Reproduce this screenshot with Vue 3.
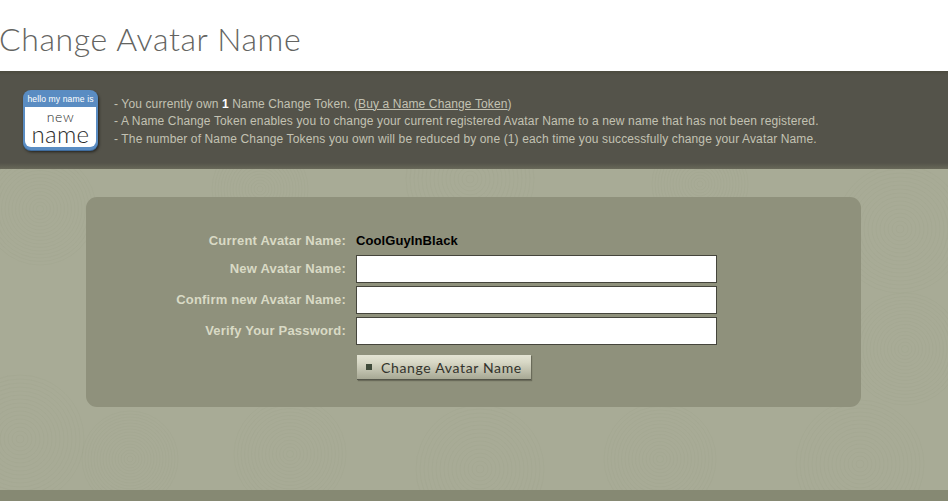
<template>
  <div class="page">
    <h1 class="title">Change Avatar Name</h1>

    <div class="info-bar">
      <div class="badge">
        <div class="badge-top">hello my name is</div>
        <div class="badge-body">
          <span class="badge-new">new</span>
          <span class="badge-name">name</span>
        </div>
      </div>
      <div class="info-text">
        <p>- You currently own <b>1</b> Name Change Token. (<a href="#">Buy a Name Change Token</a>)</p>
        <p>- A Name Change Token enables you to change your current registered Avatar Name to a new name that has not been registered.</p>
        <p>- The number of Name Change Tokens you own will be reduced by one (1) each time you successfully change your Avatar Name.</p>
      </div>
    </div>

    <div class="content">
      <svg class="swirls" width="948" height="322" viewBox="0 0 948 322" aria-hidden="true">
        <g v-for="s in swirls" :key="s.x + '-' + s.y">
          <circle v-for="r in rings" :key="r" :cx="s.x" :cy="s.y" :r="r * s.size" />
        </g>
      </svg>
      <form class="card" @submit.prevent>
        <div class="row row-current">
          <label>Current Avatar Name:</label>
          <span class="current">CoolGuyInBlack</span>
        </div>
        <div class="row">
          <label>New Avatar Name:</label>
          <input type="text" />
        </div>
        <div class="row">
          <label>Confirm new Avatar Name:</label>
          <input type="password" />
        </div>
        <div class="row">
          <label>Verify Your Password:</label>
          <input type="password" />
        </div>
        <div class="row row-btn">
          <label></label>
          <button class="submit"><i></i>Change Avatar Name</button>
        </div>
      </form>
    </div>

    <div class="bottom-strip"></div>
  </div>
</template>

<script setup>
const rings = [1, 2, 3, 4, 5, 6, 7, 8, 9, 10, 11, 12, 13, 14, 15, 16]

const swirls = [
  { x: 40, y: 40, size: 3.5 },
  { x: 20, y: 270, size: 4 },
  { x: 130, y: 290, size: 3 },
  { x: 260, y: 20, size: 3 },
  { x: 290, y: 285, size: 3.5 },
  { x: 470, y: 10, size: 4 },
  { x: 480, y: 300, size: 4 },
  { x: 660, y: 290, size: 3.5 },
  { x: 700, y: 15, size: 3 },
  { x: 900, y: 60, size: 4 },
  { x: 905, y: 180, size: 3.5 },
  { x: 860, y: 295, size: 4 }
]
</script>

<style scoped>
.page {
  width: 948px;
  height: 501px;
  overflow: hidden;
  background: #fff;
  font-family: "Liberation Sans", Arial, sans-serif;
  display: flex;
  flex-direction: column;
}

.title {
  margin: 0 0 0 -1px;
  height: 71px;
  padding-top: 20px;
  box-sizing: border-box;
  font-family: Lato, "Liberation Sans", sans-serif;
  font-size: 32px;
  font-weight: 300;
  line-height: 38px;
  letter-spacing: 0.63px;
  color: #646461;
  white-space: nowrap;
}

.info-bar {
  height: 98px;
  box-sizing: border-box;
  background: linear-gradient(#4c4b3f 0, #54534a 4px, #54534a 92px, #686859 100%);
  display: flex;
  padding: 19px 0 0 23px;
}

.badge {
  width: 75px;
  height: 60px;
  border-radius: 8px;
  background: #5a8cc2;
  box-shadow: 0 1px 0 #3f6c9d, 1px 2px 3px rgba(0, 0, 0, 0.6);
  flex: none;
  display: flex;
  flex-direction: column;
  padding: 0 2px 3px;
  box-sizing: border-box;
}

.badge-top {
  height: 17px;
  color: #fff;
  font-size: 8.6px;
  line-height: 19px;
  font-weight: 400;
  text-align: center;
  white-space: nowrap;
  letter-spacing: 0.1px;
}

.badge-body {
  flex: 1;
  display: flex;
  flex-direction: column;
  align-items: center;
  background: #fff;
  border-radius: 0 0 6px 6px;
  color: #2b2b2b;
  font-family: Lato, "Liberation Sans", sans-serif;
  font-weight: 300;
}

.badge-new {
  font-size: 14px;
  line-height: 14px;
  margin-top: 3px;
  letter-spacing: 0.6px;
}

.badge-name {
  font-size: 24px;
  line-height: 19px;
  letter-spacing: 0.3px;
}

.info-text {
  margin: 0 0 0 16px;
  padding-top: 5.5px;
  font-size: 12px;
  letter-spacing: 0.13px;
  color: #c3c2b3;
  white-space: nowrap;
}

.info-text p {
  margin: 0;
  line-height: 17.5px;
}

.info-text b {
  color: #fff;
}

.info-text a {
  color: #c3c2b3;
}

.content {
  position: relative;
  flex: 1;
  background: #a8ab96;
  padding: 28px 0 0 86px;
  overflow: hidden;
}

.swirls {
  position: absolute;
  left: 0;
  top: 0;
}

.swirls circle {
  fill: none;
  stroke: #979a85;
  stroke-width: 1;
  opacity: 0.16;
}

.card {
  position: relative;
  width: 775px;
  height: 210px;
  box-sizing: border-box;
  background: #8f917c;
  border-radius: 11px;
  padding: 31px 0 0 0;
}

.row {
  display: flex;
  align-items: center;
  height: 28px;
  margin-bottom: 3px;
}

.row-current {
  height: 24px;
  box-sizing: border-box;
}

.row-btn {
  height: 25px;
  margin-top: 10px;
  margin-bottom: 0;
}

.row label {
  width: 260px;
  padding-bottom: 2px;
  box-sizing: border-box;
  text-align: right;
  font-size: 13px;
  letter-spacing: 0.19px;
  font-weight: 700;
  color: #d9dac5;
  flex: none;
  white-space: nowrap;
}

.row-current label {
  padding-bottom: 0;
}

.current {
  margin-left: 10px;
  font-size: 13px;
  letter-spacing: 0.1px;
  font-weight: 700;
  color: #000;
}

.row input {
  margin-left: 10px;
  width: 361px;
  height: 28px;
  box-sizing: border-box;
  border: 1px solid #45453c;
  background: #fff;
  padding: 2px 4px;
  outline: none;
}

.submit {
  margin-left: 11px;
  width: 174px;
  height: 25px;
  box-sizing: border-box;
  border: none;
  border-bottom: 1px solid #55564a;
  background: linear-gradient(#e4e4d4, #d8d8c6 30%, #a7a894);
  box-shadow: 1px 1px 1px rgba(50, 50, 40, 0.4);
  color: #33332c;
  font-family: Lato, "Liberation Sans", sans-serif;
  font-size: 14px;
  letter-spacing: 0.65px;
  display: flex;
  align-items: center;
  padding: 0 0 0 9px;
  white-space: nowrap;
}

.submit i {
  width: 6px;
  height: 6px;
  background: #3f4a3a;
  margin-right: 9px;
}

.bottom-strip {
  height: 11px;
  background: #868973;
  flex: none;
}
</style>
